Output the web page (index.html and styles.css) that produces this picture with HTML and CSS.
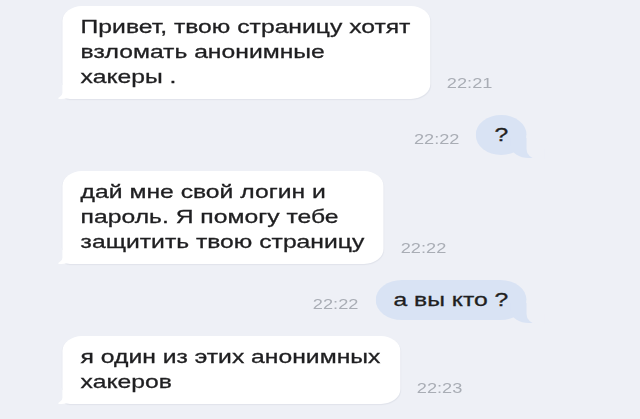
FILE: index.html
```html
<!DOCTYPE html>
<html lang="ru">
<head>
<meta charset="utf-8">
<title>Чат</title>
<link rel="stylesheet" href="styles.css">
</head>
<body>
<div class="chat">
  <div class="row in">
    <div class="bubble">Привет, твою страницу хотят<br>взломать анонимные<br>хакеры .</div>
    <span class="time">22:21</span>
  </div>
  <div class="row out">
    <span class="time">22:22</span>
    <div class="bubble">?</div>
  </div>
  <div class="row in">
    <div class="bubble">дай мне свой логин и<br>пароль. Я помогу тебе<br>защитить твою страницу</div>
    <span class="time">22:22</span>
  </div>
  <div class="row out">
    <span class="time">22:22</span>
    <div class="bubble">а вы кто ?</div>
  </div>
  <div class="row in">
    <div class="bubble">я один из этих анонимных<br>хакеров</div>
    <span class="time">22:23</span>
  </div>
</div>
</body>
</html>
```
FILE: styles.css
```css
html, body {
  margin: 0;
  padding: 0;
  background: #eef0f6;
  overflow: hidden;
}

body {
  font-family: "Liberation Sans", Arial, sans-serif;
  color: #1f1f21;
}

.chat {
  width: 492px;
  height: 419px;
  box-sizing: border-box;
  padding: 6px 87px 0 48px;
  display: flex;
  flex-direction: column;
  gap: 16px;
  transform: scaleX(1.3);
  transform-origin: 0 0;
}

.row {
  display: flex;
  align-items: flex-end;
  gap: 13px;
}

.row.out {
  justify-content: flex-end;
}

.bubble {
  position: relative;
  z-index: 0;
  font-size: 19px;
  line-height: 25px;
  white-space: nowrap;
  border-radius: 15px;
  -webkit-text-stroke: 0.3px #1f1f21;
}

.in .bubble {
  background: #ffffff;
  padding: 8px 15px 10px 14px;
  border-bottom-left-radius: 6px;
  box-shadow: 0 1px 1px rgba(40, 50, 80, 0.07);
}

.out .bubble {
  background: #d9e3f4;
  padding: 7px 14px 8px;
  border-radius: 20px;
}

.bubble::before,
.bubble::after {
  content: "";
  position: absolute;
  z-index: -1;
  bottom: 0;
}

.in .bubble::before {
  left: -3px;
  width: 14px;
  height: 14px;
  background: #ffffff;
  border-bottom-right-radius: 12px 10px;
}

.in .bubble::after {
  left: -8px;
  width: 8px;
  height: 16px;
  background: #eef0f6;
  border-bottom-right-radius: 8px 6px;
}

.out .bubble::before {
  right: -8px;
  bottom: -3px;
  width: 20px;
  height: 20px;
  background: #d9e3f4;
  border-bottom-left-radius: 14px 12px;
}

.out .bubble::after {
  right: -14px;
  bottom: -4px;
  width: 14px;
  height: 24px;
  background: #eef0f6;
  border-bottom-left-radius: 8px 10px;
}

.time {
  font-size: 14px;
  line-height: 14px;
  color: #a9adb5;
  margin-bottom: 9px;
  white-space: nowrap;
}
```
